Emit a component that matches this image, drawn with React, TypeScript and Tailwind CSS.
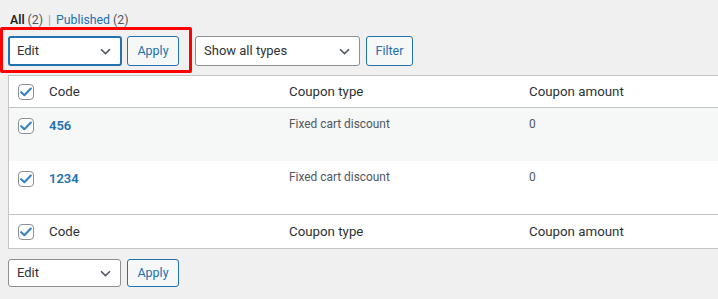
import React from 'react'

const font = { fontFamily: 'Roboto, "Noto Sans", "Liberation Sans", sans-serif' }

function Chevron() {
  return (
    <svg width="11" height="7" viewBox="0 0 11 7" className="shrink-0">
      <path d="M1 1.2 L5.5 5.6 L10 1.2" fill="none" stroke="#50575e" strokeWidth="1.6" />
    </svg>
  )
}

function Check() {
  return (
    <span className="flex w-[16px] h-[16px] items-center justify-center rounded-[4px] border border-[#8c8f94] bg-white">
      <svg width="12" height="10" viewBox="0 0 12 10">
        <path d="M1.2 5.2 L4.4 8.2 L10.8 1.6" fill="none" stroke="#3582c4" strokeWidth="2.1" strokeLinecap="round" strokeLinejoin="round" />
      </svg>
    </span>
  )
}

function Select({ label, width, focused }: { label: string; width: string; focused?: boolean }) {
  return (
    <div
      className={`flex items-center justify-between h-full bg-white rounded-[3px] pr-[9px] text-[13px] text-[#2c3338] ${width} ${focused ? 'border-2 border-[#2271b1] pl-[7px]' : 'border border-[#8c8f94] pl-[8px]'}`}
    >
      <span>{label}</span>
      <Chevron />
    </div>
  )
}

function Btn({ label, width }: { label: string; width: string }) {
  return (
    <div className={`flex items-center justify-center h-full rounded-[3px] border border-[#2271b1] bg-[#f6f7f7] text-[12.5px] text-[#2271b1] ${width}`}>
      {label}
    </div>
  )
}

const cols = 'grid grid-cols-[30px_240px_240px_1fr]'

function HeadRow({ h, border }: { h: string; border: string }) {
  return (
    <div className={`${cols} ${h} ${border} border-[#c3c4c7] items-center text-[13.3px] text-[#2c3338]`}>
      <div className="pl-[9px]"><Check /></div>
      <div className="pl-[10px]">Code</div>
      <div className="pl-[10px]">Coupon type</div>
      <div className="pl-[10px]">Coupon amount</div>
    </div>
  )
}

function Row({ code, bg }: { code: string; bg: string }) {
  return (
    <div className={`${cols} h-[53px] ${bg} text-[#50575e]`}>
      <div className="pl-[9px] pt-[10px]"><Check /></div>
      <div className="pl-[10px] pt-[8px] text-[13px] font-semibold text-[#2271b1]">{code}</div>
      <div className="pl-[10px] pt-[8px] text-[11.9px]">Fixed cart discount</div>
      <div className="pl-[10px] pt-[8px] text-[11.9px]">0</div>
    </div>
  )
}

export default function App() {
  const coupons = [
    { code: '456', bg: 'bg-[#f6f7f7]' },
    { code: '1234', bg: 'bg-white' },
  ]

  return (
    <div className="relative w-[718px] h-[299px] overflow-hidden bg-[#f0f0f1]" style={font}>
      {/* Status links */}
      <div className="flex items-center h-[14px] mt-[13px] pl-[10px] text-[12.3px] text-[#50575e]">
        <span className="font-semibold text-[#1d2327]">All</span>
        <span className="ml-[3px]">(2)</span>
        <span className="mx-[5px] text-[#a7aaad]">|</span>
        <span className="text-[#2271b1]">Published</span>
        <span className="ml-[3px]">(2)</span>
      </div>

      {/* Top actions */}
      <div className="flex h-[30px] mt-[9px] pl-[8px]">
        <Select label="Edit" width="w-[114px]" focused />
        <div className="ml-[5px]"><Btn label="Apply" width="w-[52px]" /></div>
        <div className="ml-[16px]"><Select label="Show all types" width="w-[165px]" /></div>
        <div className="ml-[6px]"><Btn label="Filter" width="w-[47px]" /></div>
      </div>

      {/* Table */}
      <div className="ml-[8px] mt-[9px] w-[730px] border border-[#c3c4c7] bg-white">
        <HeadRow h="h-[32px]" border="border-b" />
        {coupons.map((c) => (
          <Row key={c.code} code={c.code} bg={c.bg} />
        ))}
        <HeadRow h="h-[34px]" border="border-t" />
      </div>

      {/* Bottom actions */}
      <div className="flex h-[28px] mt-[10px] pl-[8px] gap-[6px]">
        <Select label="Edit" width="w-[113px]" />
        <Btn label="Apply" width="w-[52px]" />
      </div>

      {/* Highlight annotation */}
      <div className="absolute left-0 top-[27px] w-[192px] h-[46px] border-[3px] border-[#ff0000] rounded-[2px]" />
    </div>
  )
}
